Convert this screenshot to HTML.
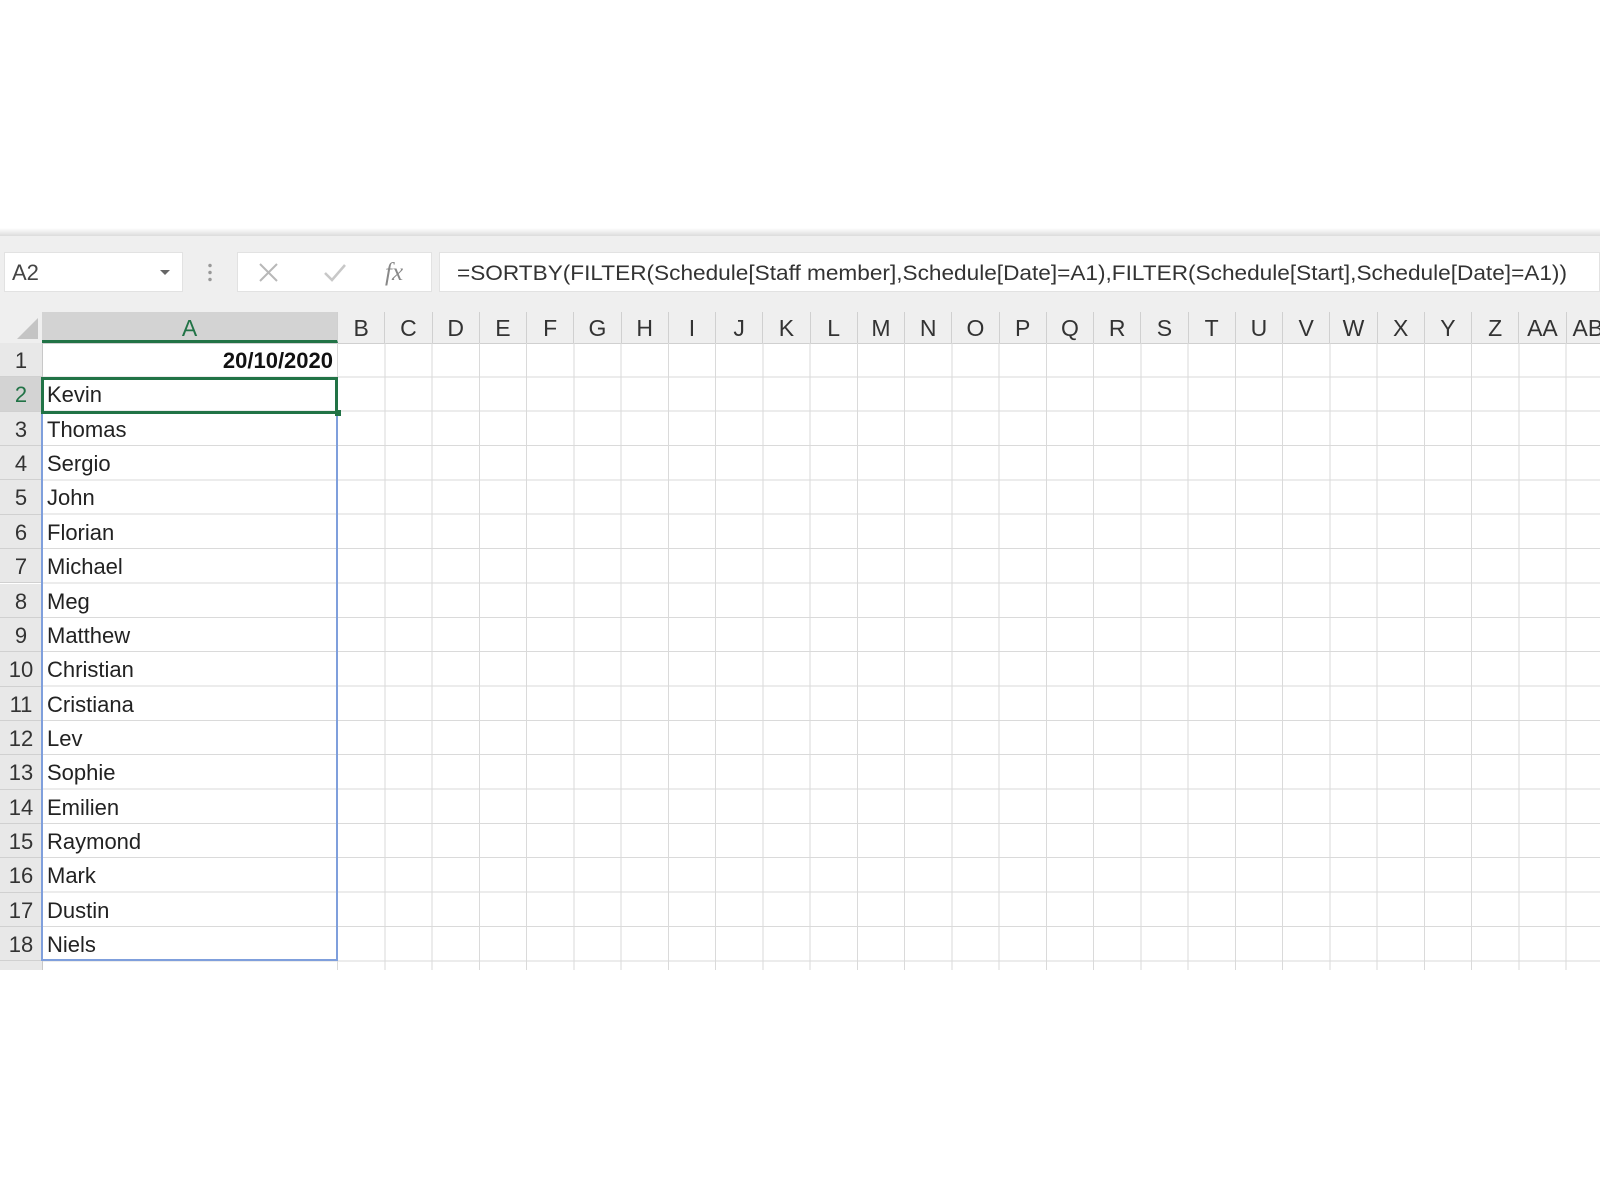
<!DOCTYPE html>
<html><head><meta charset="utf-8"><style>
body{margin:0;width:1600px;height:1200px;background:#fff;position:relative;overflow:hidden;font-family:"Liberation Sans",sans-serif;color:#222}
.a{position:absolute}
.ch{position:absolute;top:312px;height:31px;line-height:33px;text-align:center;font-size:23px;color:#333;border-right:1px solid #d0d0d0;box-sizing:border-box}
.rh{position:absolute;left:0;width:42px;height:34.35px;line-height:36px;text-align:center;font-size:22px;color:#333;border-bottom:1px solid #d0d0d0;box-sizing:border-box;background:#e8e8e8}
.cell{position:absolute;left:47px;font-size:22px;line-height:36px;color:#222}
</style></head><body>
<div class="a" style="left:0;top:228px;width:1600px;height:8px;background:linear-gradient(#fff,#dcdcdc)"></div>
<div class="a" style="left:0;top:236px;width:1600px;height:107px;background:#efefef"></div>
<div class="a" style="left:4px;top:252px;width:179px;height:40px;background:#fff;border:1px solid #e2e2e2;box-sizing:border-box"></div>
<div class="a" style="left:12px;top:258px;font-size:22px;line-height:30px;color:#444">A2</div>
<div class="a" style="left:160px;top:270px;width:0;height:0;border-left:5px solid transparent;border-right:5px solid transparent;border-top:5px solid #666"></div>
<div class="a" style="left:208px;top:262px;width:4px;height:20px;background:radial-gradient(circle,#999 1.5px,transparent 2px) 0 0/4px 7px"></div>
<div class="a" style="left:237px;top:252px;width:195px;height:40px;background:#fff;border:1px solid #e2e2e2;box-sizing:border-box"></div>
<svg class="a" style="left:255px;top:260px" width="160" height="26">
<path d="M5 4L22 21M22 4L5 21" stroke="#b8b8b8" stroke-width="2" fill="none"/>
<path d="M70 13L77 20L90 5" stroke="#c8c8c8" stroke-width="2.5" fill="none"/>
<text x="130" y="20" font-family="Liberation Serif,serif" font-style="italic" font-size="25" fill="#888">fx</text>
</svg>
<div class="a" style="left:439px;top:252px;width:1161px;height:40px;background:#fff;border:1px solid #e2e2e2;box-sizing:border-box"></div>
<svg class="a" style="left:0;top:252px" width="1600" height="40"><text x="457" y="28" font-size="21.5" fill="#333" textLength="1110" lengthAdjust="spacingAndGlyphs">=SORTBY(FILTER(Schedule[Staff member],Schedule[Date]=A1),FILTER(Schedule[Start],Schedule[Date]=A1))</text></svg>
<div class="a" style="left:0;top:312px;width:1600px;height:31px;background:#efefef;border-bottom:1px solid #d0d0d0"></div>
<svg class="a" style="left:0;top:312px" width="42" height="31"><path d="M38 6L38 27L17 27Z" fill="#c4c4c4"/></svg>
<div class="ch" style="left:42px;width:296px;background:#d3d3d3;color:#217346;border-bottom:3px solid #217346">A</div>
<div class="ch" style="left:338.0px;width:47.25px">B</div><div class="ch" style="left:385.3px;width:47.25px">C</div><div class="ch" style="left:432.5px;width:47.25px">D</div><div class="ch" style="left:479.8px;width:47.25px">E</div><div class="ch" style="left:527.0px;width:47.25px">F</div><div class="ch" style="left:574.3px;width:47.25px">G</div><div class="ch" style="left:621.5px;width:47.25px">H</div><div class="ch" style="left:668.8px;width:47.25px">I</div><div class="ch" style="left:716.0px;width:47.25px">J</div><div class="ch" style="left:763.3px;width:47.25px">K</div><div class="ch" style="left:810.5px;width:47.25px">L</div><div class="ch" style="left:857.8px;width:47.25px">M</div><div class="ch" style="left:905.0px;width:47.25px">N</div><div class="ch" style="left:952.3px;width:47.25px">O</div><div class="ch" style="left:999.5px;width:47.25px">P</div><div class="ch" style="left:1046.8px;width:47.25px">Q</div><div class="ch" style="left:1094.0px;width:47.25px">R</div><div class="ch" style="left:1141.3px;width:47.25px">S</div><div class="ch" style="left:1188.5px;width:47.25px">T</div><div class="ch" style="left:1235.8px;width:47.25px">U</div><div class="ch" style="left:1283.0px;width:47.25px">V</div><div class="ch" style="left:1330.3px;width:47.25px">W</div><div class="ch" style="left:1377.5px;width:47.25px">X</div><div class="ch" style="left:1424.8px;width:47.25px">Y</div><div class="ch" style="left:1472.0px;width:47.25px">Z</div><div class="ch" style="left:1519.3px;width:47.25px">AA</div><div class="ch" style="left:1566.5px;width:47.25px;text-align:left;padding-left:6px">AB</div>
<div class="a" style="left:42px;top:343px;width:1558px;height:627px;background:repeating-linear-gradient(to bottom,transparent 0,transparent 33.35px,#dadada 33.35px,#dadada 34.35px)"></div>
<div class="a" style="left:337px;top:343px;width:1px;height:627px;background:#dadada"></div>
<div class="a" style="left:338px;top:343px;width:1262px;height:627px;background:repeating-linear-gradient(to right,transparent 0,transparent 46.25px,#dadada 46.25px,#dadada 47.25px)"></div>
<div class="a" style="left:42px;top:343px;width:1px;height:627px;background:#c8c8c8"></div>
<div class="rh" style="top:343.0px">1</div><div class="rh" style="top:377.4px;background:#d3d3d3;color:#217346">2</div><div class="rh" style="top:411.7px">3</div><div class="rh" style="top:446.1px">4</div><div class="rh" style="top:480.4px">5</div><div class="rh" style="top:514.8px">6</div><div class="rh" style="top:549.1px">7</div><div class="rh" style="top:583.5px">8</div><div class="rh" style="top:617.8px">9</div><div class="rh" style="top:652.2px">10</div><div class="rh" style="top:686.5px">11</div><div class="rh" style="top:720.9px">12</div><div class="rh" style="top:755.2px">13</div><div class="rh" style="top:789.6px">14</div><div class="rh" style="top:823.9px">15</div><div class="rh" style="top:858.3px">16</div><div class="rh" style="top:892.6px">17</div><div class="rh" style="top:927.0px">18</div><div class="rh" style="top:961.3px;height:8.7px;border:0"></div>
<div class="a" style="left:42px;top:343px;width:291px;text-align:right;font-size:22px;line-height:36px;font-weight:bold;color:#111">20/10/2020</div>
<div class="cell" style="top:377.4px">Kevin</div><div class="cell" style="top:411.7px">Thomas</div><div class="cell" style="top:446.1px">Sergio</div><div class="cell" style="top:480.4px">John</div><div class="cell" style="top:514.8px">Florian</div><div class="cell" style="top:549.1px">Michael</div><div class="cell" style="top:583.5px">Meg</div><div class="cell" style="top:617.8px">Matthew</div><div class="cell" style="top:652.2px">Christian</div><div class="cell" style="top:686.5px">Cristiana</div><div class="cell" style="top:720.9px">Lev</div><div class="cell" style="top:755.2px">Sophie</div><div class="cell" style="top:789.6px">Emilien</div><div class="cell" style="top:823.9px">Raymond</div><div class="cell" style="top:858.3px">Mark</div><div class="cell" style="top:892.6px">Dustin</div><div class="cell" style="top:927.0px">Niels</div>
<div class="a" style="left:41px;top:377px;width:297px;height:584px;border:2px solid #7f9fdc;box-sizing:border-box"></div>
<div class="a" style="left:41px;top:377px;width:297px;height:37px;border:3px solid #217346;box-sizing:border-box"></div>
<div class="a" style="left:335px;top:410px;width:6px;height:6px;background:#217346"></div>
<div class="a" style="left:0;top:970px;width:1600px;height:230px;background:#fff"></div>
</body></html>
